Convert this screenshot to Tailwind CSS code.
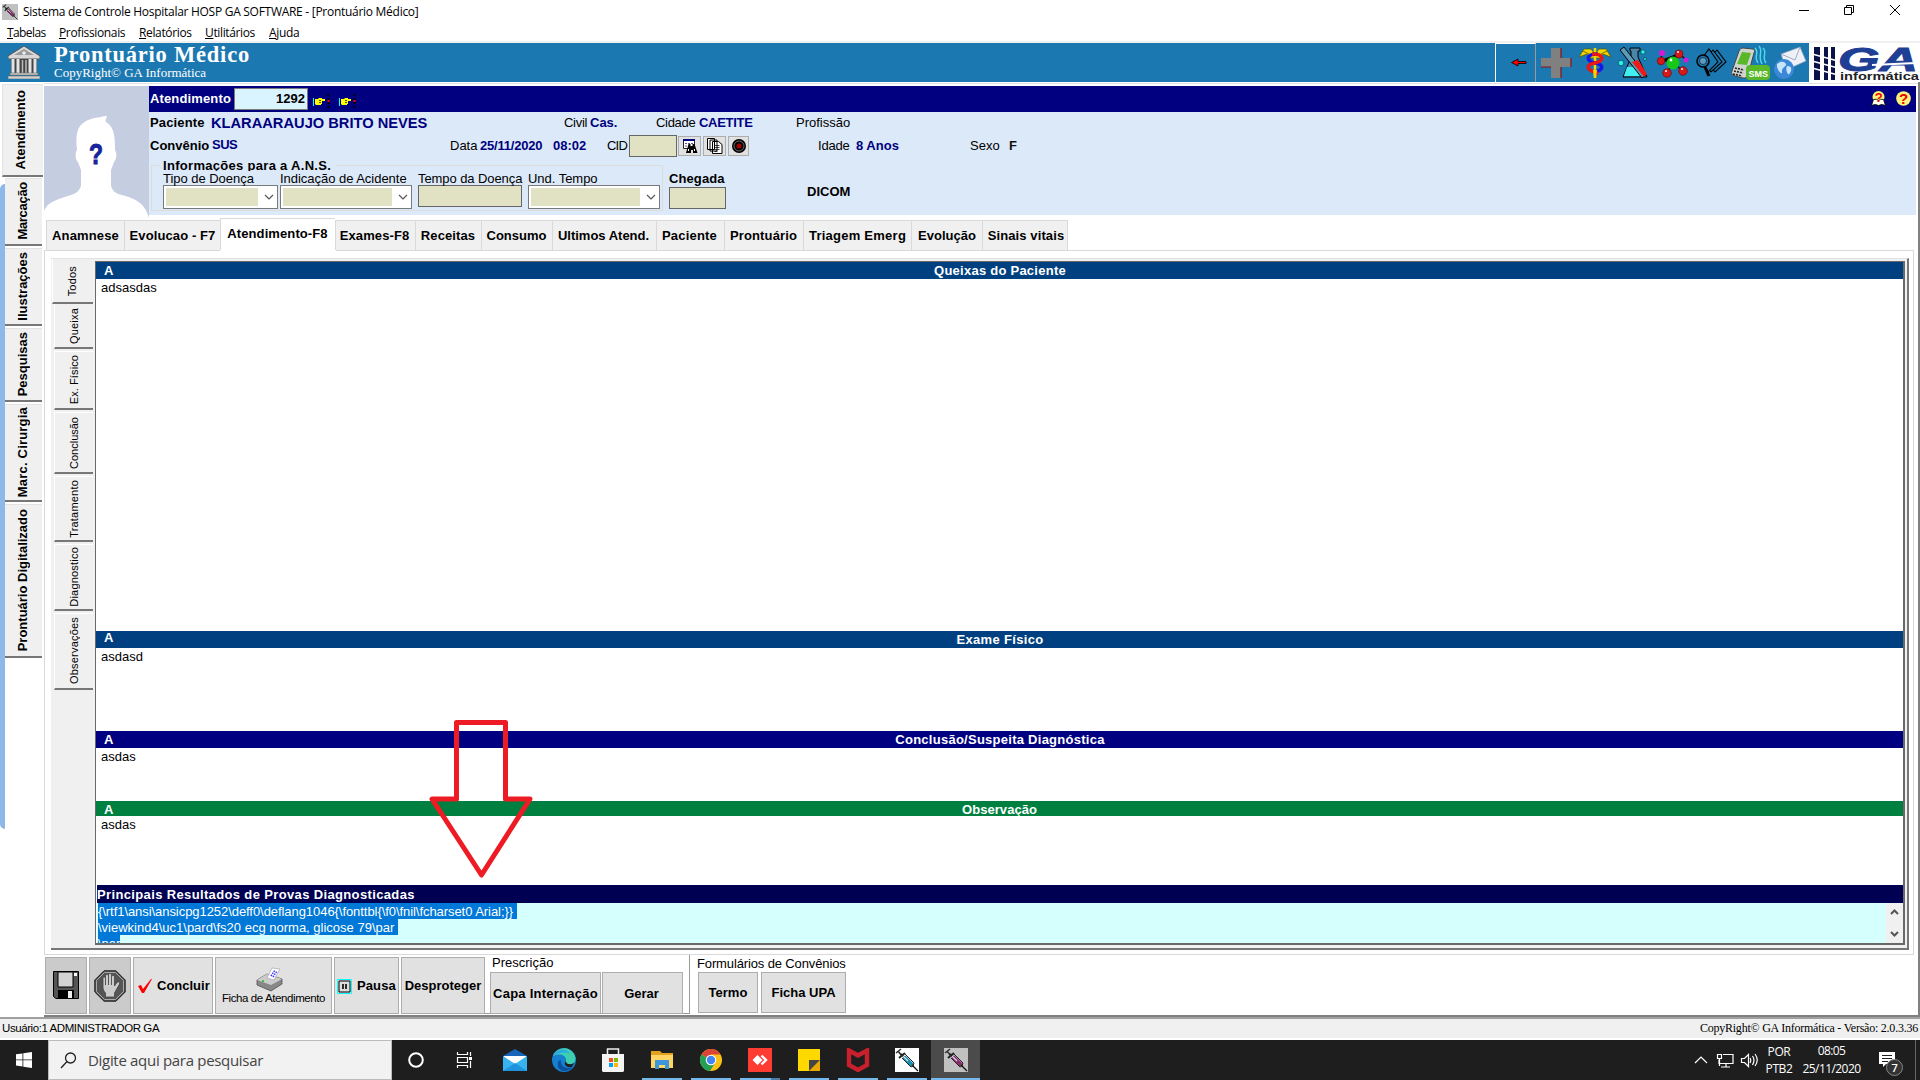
<!DOCTYPE html>
<html lang="pt-BR">
<head>
<meta charset="utf-8">
<title>Sistema de Controle Hospitalar HOSP GA SOFTWARE</title>
<script src="https://cdn.jsdelivr.net/npm/@tailwindcss/browser@4"></script>
</head>
<body class="flex h-[1080px] w-[1920px] flex-col overflow-hidden bg-white font-['Liberation_Sans',sans-serif] text-[13px] leading-4 whitespace-nowrap text-black">

<svg class="hidden">
  <symbol id="syringe" viewBox="0 0 24 24">
    <path d="M1 5l5-4M3 3l4 5" stroke="#333" stroke-width="1.6"/>
    <path d="M4 10l6-5M6 6l12 12" stroke="#222" stroke-width="2"/>
    <path d="M9 9l8 8" stroke="currentColor" stroke-width="4"/>
    <path d="M7 10l9 9 2-1M10 6l9 9-1 3" stroke="#222" fill="none"/>
    <path d="M8 8l5 5" stroke="#d8d8e8" stroke-width="1.2"/>
    <path d="M18 18l5 5" stroke="#111" stroke-width="1.2"/>
  </symbol>
  <symbol id="chev" viewBox="0 0 10 6"><path d="M1 1l4 4 4-4" fill="none" stroke="#555" stroke-width="1.2"/></symbol>
  <symbol id="hand" viewBox="0 0 17 14">
    <path d="M.5 4v8" stroke="#0ff"/><path d="M2 5h3l1-1h3v1h3v2H9v3H8v1H3l-1-1z" fill="#ff0"/>
    <path d="M6 6.500h2M6 8.500h2" stroke="#000" stroke-width=".7"/><path d="M15.500 0v14" stroke="#000" stroke-width="2" stroke-dasharray="2 2"/><path d="M14.500 6h2v2h-2z" fill="#f00"/>
  </symbol>
</svg>

<!-- Title bar -->
<div class="flex h-[23px] items-center font-['Open_Sans',sans-serif] text-[12px]">
  <svg class="ml-[2px] size-4 bg-[#c0c0c0] text-[#8b2a6b]"><use href="#syringe"/></svg>
  <span class="ml-[5px] flex-1 tracking-[-0.28px]">Sistema de Controle Hospitalar HOSP GA SOFTWARE - [Prontuário Médico]</span>
  <svg class="mb-[3px] h-3 w-[110px]" viewBox="0 0 110 12" fill="none" stroke="#000"><path d="M4 6.500h10M49.500 3.500h7v7h-7zM51.500 3v-1.500h7v7h-2M95 1l10 10M105 1l-10 10"/></svg>
  <div class="w-[15px]"></div>
</div>
<div class="flex h-[18px] items-center border-b border-white pt-[2px] pl-[7px] font-['Open_Sans',sans-serif] text-[12px] tracking-[-0.36px]">
  <span class="w-[52px] tracking-[-0.6px]"><u>T</u>abelas</span><span class="w-[80px]"><u>P</u>rofissionais</span><span class="w-[66px]"><u>R</u>elatórios</span><span class="w-[64px]"><u>U</u>tilitários</span><span><u>A</u>juda</span>
</div>
<div class="h-[2px] bg-[#f0f0f0]"></div>

<!-- Module header -->
<div class="flex h-[39px] bg-[#1c78b0] font-['Liberation_Serif',serif] text-white">
  <svg class="ml-[8px] mt-[3px] h-[33px] w-[32px]" viewBox="0 0 32 33">
    <path d="M0 10L16 0l16 10v3H0z" fill="#d8d8d8" stroke="#555"/><path d="M6 9l10-6 10 6z" fill="#999"/><circle cx="16" cy="7" r="1.800" fill="#eee"/>
    <path d="M3 13h26v15H3z" fill="#444"/><path d="M5 13v14M10 13v14M22 13v14M27 13v14" stroke="#e4e4e4" stroke-width="3"/><path d="M14.500 14v13M18 14v13" stroke="#bbb" stroke-width="1.500"/>
    <path d="M2 27h28v2H2zM0 30h32v3H0z" fill="#d0d0d0" stroke="#666" stroke-width=".6"/>
  </svg>
  <div class="ml-[14px] flex-1">
    <div class="h-[21px] text-[22.5px] leading-[23px] font-bold tracking-[0.78px]">Prontuário Médico</div>
    <div class="text-[13px] leading-[17px]">CopyRight© GA Informática</div>
  </div>
  <div class="flex w-[41px] items-center justify-center border-t border-r border-l border-t-white border-r-[#999] border-l-white">
    <svg class="mr-px mb-[2px] ml-[8px] h-[9px] w-4" viewBox="0 0 16 9"><path d="M.5 4.500L7 1v2.500h8v2H7V8z" fill="#f00" stroke="#000" stroke-width=".8"/></svg>
  </div>
  <svg class="h-[39px] w-[273px]" viewBox="1536 43 273 39">
    <path d="M1551 48h10v10h10v9h-10v11h-10V67h-10v-9h10z" fill="#808080"/><path d="M1561 48v10M1541 67h10M1561 67v11M1571 58v9" stroke="#8b1010" stroke-width="1.200"/>
    <!-- caduceus -->
    <path d="M1579 57l5-8h7l4 5 4-5h7l5 8-8-3-3 4h-10l-3-4z" fill="#f0d800" stroke="#5a5000" stroke-width=".7"/><path d="M1583 51l8 4M1607 51l-8 4" stroke="#806c00"/>
    <path d="M1595 48v30" stroke="#f0d800" stroke-width="2.500"/>
    <path d="M1598 54c-12 0-13 7-3 9s8 7 0 9" fill="none" stroke="#1616e8" stroke-width="3.500"/><path d="M1592 54c12 0 13 7 3 9s-8 7 0 9l3 2" fill="none" stroke="#e81616" stroke-width="3.500"/>
    <path d="M1594 70l1 8 1-8" stroke="#f0d800" stroke-width="2"/>
    <!-- laboratory glassware -->
    <path d="M1630 48h10v3h-2v6l9 20h-24l8-20v-6h-1z" fill="#4a86a8" stroke="#000"/><path d="M1627 67h12l5 9h-20z" fill="#40f0f0"/>
    <path d="M1620 50l4-3 22 28-4 3z" fill="#5b9bb8" stroke="#000"/><path d="M1632 62l6-2 9 14-3 3z" fill="#f01818"/>
    <g fill="#2cf0e0" stroke="#045" stroke-width=".7"><circle cx="1621" cy="63" r="2.800"/><circle cx="1643" cy="52" r="2.200"/><circle cx="1645" cy="59" r="1.500"/></g>
    <!-- molecule -->
    <path d="M1661 60l12 3 6-10M1673 63l-6 10M1673 63l10 8M1679 53l7 7M1661 60l1-7" stroke="#111" stroke-width="1.500"/>
    <circle cx="1673" cy="63" r="6.500" fill="#18c818"/><g fill="#d81818" stroke="#600" stroke-width=".6"><circle cx="1661" cy="61" r="3.800"/><circle cx="1679" cy="54" r="4"/><circle cx="1667" cy="73" r="4.300"/><circle cx="1683" cy="71" r="4.300"/></g>
    <g fill="#d818d8"><circle cx="1662" cy="53" r="3"/><circle cx="1686" cy="60" r="2.500"/></g><g fill="#fff"><circle cx="1671" cy="60" r="1.400"/><circle cx="1678" cy="52" r="1"/><circle cx="1666" cy="71" r="1"/><circle cx="1682" cy="69" r="1"/></g>
    <!-- document search -->
    <g fill="#1c78b0" stroke="#000" stroke-width="1.100"><path d="M1717 50l9 12-11 10-8-11z"/><path d="M1713 50l9 12-11 10-8-11z"/><path d="M1709 49l9 13-10 10-8-11z"/></g><circle cx="1703" cy="61" r="6" fill="#1c78b0" stroke="#000" stroke-width="1.500"/><circle cx="1703" cy="61" r="3.500" fill="#5a9cc4" stroke="#000" stroke-width=".6"/><path d="M1705 67l4 9" stroke="#000" stroke-width="3"/>
    <!-- phone with messages -->
    <path d="M1743 48l10 1c2 1 2 2 1 4l-6 22c-1 3-3 3-5 3l-8-2c-3-1-4-2-3-5l7-20c1-2 2-3 4-3z" fill="#d0d4d0" stroke="#444"/><path d="M1742 52l9 1-4 12-10-1z" fill="#58b828"/><path d="M1735 68l9 2M1734 71l9 2M1733 74l9 2" stroke="#222" stroke-width="1.600" stroke-dasharray="2 1"/>
    <path d="M1755 48c5 5-2 8 3 15M1759 46c5 6-2 9 3 18M1763 48c5 5-2 8 3 15" stroke="#48d8e8" stroke-width="1.500" fill="none"/>
    <rect x="1746" y="65" width="24" height="15" rx="4" fill="#58b828"/><text x="1748.500" y="76.500" font-family="Liberation Sans" font-size="9" font-weight="bold" fill="#fff">SMS</text>
    <!-- web mail -->
    <path d="M1781 54l19-7 6 14-20 9z" fill="#eef2f8" stroke="#8898b0" stroke-width=".7"/><path d="M1781 54l14 6 5-13" fill="none" stroke="#a0acc0"/><circle cx="1784" cy="69" r="10" fill="#3c88d8"/><path d="M1777 64c5-4 8-2 9 0s-5 4-4 8-6-2-5-8zM1787 66c5 0 5 3 3 7s-5-3-3-7z" fill="#c8e4f8"/>
  </svg>
  <svg class="h-[39px] w-[111px] bg-white" viewBox="1809 43 111 39">
    <path d="M1814 47h6v33h-6zM1824 47h4v33h-4zM1831 47h4v33h-4z" fill="#0a1248"/><path d="M1812 54l26 7M1812 61l26 7M1812 68l26 7" stroke="#fff" stroke-width="1.500"/>
    <text x="1838" y="71" font-family="Liberation Sans" font-size="33" font-weight="bold" font-style="italic" fill="#1f3f95" stroke="#1f3f95" stroke-width="1" textLength="80" lengthAdjust="spacingAndGlyphs">GA</text>
    <path d="M1872 64l44-2v2l-44 2z" fill="#fff"/>
    <text x="1840" y="80" font-family="Liberation Sans" font-size="10" font-weight="bold" fill="#222" textLength="79" lengthAdjust="spacingAndGlyphs">informática</text>
  </svg>
</div>

<!-- Work area -->
<div class="flex h-[935px]">
  <!-- Side tabs -->
  <div class="flex w-[44px] flex-col border-t border-white pt-[1px] font-bold">
    <div class="ml-[2px] flex h-[93px] w-[41px] items-center justify-center border-t border-b-2 border-l border-t-[#e3e3e3] border-b-[#777] border-l-[#e3e3e3] bg-[#f0f0f0]"><span class="mr-[5px] rotate-180 [writing-mode:vertical-rl]">Atendimento</span></div>
    <div class="flex flex-1">
      <div class="mt-[7px] h-[645px] w-[5px] rounded-l-[5px] bg-[#8cb8ea]"></div>
      <div class="flex w-[37px] flex-col gap-[2px] pt-px">
        <div class="flex h-[68px] items-center justify-center border-t border-b-2 border-t-[#e3e3e3] border-b-[#777] bg-[#f0f0f0]"><span class="mr-px mb-[2px] rotate-180 tracking-[-0.3px] [writing-mode:vertical-rl]">Marcação</span></div>
        <div class="flex h-[78px] items-center justify-center border-t border-b-2 border-t-[#e3e3e3] border-b-[#777] bg-[#f0f0f0]"><span class="mr-px rotate-180 [writing-mode:vertical-rl]">Ilustrações</span></div>
        <div class="flex h-[74px] items-center justify-center border-t border-b-2 border-t-[#e3e3e3] border-b-[#777] bg-[#f0f0f0]"><span class="mr-px mb-px rotate-180 [writing-mode:vertical-rl]">Pesquisas</span></div>
        <div class="flex h-[98px] items-center justify-center border-t border-b-2 border-t-[#e3e3e3] border-b-[#777] bg-[#f0f0f0]"><span class="mr-px rotate-180 tracking-[0.2px] [writing-mode:vertical-rl]">Marc. Cirurgia</span></div>
        <div class="flex h-[154px] items-center justify-center border-t border-b-2 border-t-[#e3e3e3] border-b-[#777] bg-[#f0f0f0]"><span class="mr-px mb-px rotate-180 [writing-mode:vertical-rl]">Prontuário Digitalizado</span></div>
      </div>
    </div>
  </div>

  <div class="flex w-[1876px] flex-col border-r-2 border-b-2 border-[#808080]">
    <div class="mt-px h-[3px] border-t border-[#e3e3e3]"></div>
    <!-- Patient data -->
    <div class="flex h-[132px]">
      <svg class="h-[132px] w-[105px] bg-[#c5cde0]" viewBox="0 0 105 132">
        <path d="M0 132v-7c3-9 14-12 27-16 8-3 8-5 10-9V84l-3-8c-3-2-3-10-1-12-1-10-1-18 3-24 5-6 12-8 21-9 2-1 4-1 6-1-1 3-2 4-1 6 9 5 9 17 9 28 2 3 2 9-1 12l-3 8v16c2 5 3 7 11 9 14 4 23 8 27 23z" fill="#fff"/>
        <text x="45" y="78" font-family="Liberation Sans" font-size="29" font-weight="bold" fill="#17249a" stroke="#17249a" textLength="14" lengthAdjust="spacingAndGlyphs">?</text>
      </svg>
      <div class="w-[1767px]">
        <div class="flex h-[26px] items-center bg-[#000080] pl-px">
          <span class="w-[84px] pb-px font-bold tracking-[0.14px] text-white">Atendimento</span>
          <span class="flex h-[22px] w-[74px] items-center justify-end border border-[#7a7a7a] bg-[#d9f3ff] pr-[2px] font-bold">1292</span>
          <svg class="mt-[4px] ml-[5px] h-[14px] w-[17px]"><use href="#hand"/></svg>
          <svg class="mt-[4px] ml-[9px] h-[14px] w-[17px]"><use href="#hand"/></svg>
          <div class="flex-1"></div>
          <svg class="mr-[5px] h-4 w-[40px]" viewBox="0 0 40 16">
            <circle cx="7.500" cy="6" r="6" fill="#fff27a"/><path d="M.5 14.500l2-6q3-1 5 1 2-2 5-1l2 6q-4-2-7 0-3-2-7 0z" fill="#ffe" stroke="#000" stroke-width=".8"/><text x="3.800" y="10.500" font-size="13" font-weight="bold" fill="#e00">?</text>
            <circle cx="32.500" cy="7.500" r="7.300" fill="#fff27a"/><text x="28" y="13" font-size="15" font-weight="bold" fill="#e00">?</text>
          </svg>
        </div>
        <div class="h-[103px] bg-[#dce9f8] pt-[3px] pl-px">
          <div class="flex h-[20px] text-[#000080]">
            <span class="w-[61px] font-bold tracking-[0.15px] text-black">Paciente</span><span class="w-[353px] text-[14.67px] font-bold">KLARAARAUJO BRITO NEVES</span>
            <span class="w-[26px] tracking-[-0.3px] text-black">Civil</span><span class="w-[66px] font-bold">Cas.</span>
            <span class="w-[43px] tracking-[-0.3px] text-black">Cidade</span><span class="w-[97px] font-bold tracking-[-0.3px]">CAETITE</span><span class="text-black">Profissão</span>
          </div>
          <div class="flex h-[22px] items-center text-[#000080]">
            <span class="w-[62px] pb-px font-bold text-black">Convênio</span><span class="w-[238px] pb-[2px] font-bold tracking-[-0.5px]">SUS</span>
            <span class="w-[30px] text-black">Data</span><span class="w-[73px] font-bold tracking-[-0.2px]">25/11/2020</span><span class="w-[54px] font-bold">08:02</span>
            <span class="w-[22px] tracking-[-0.8px] text-black">CID</span><span class="h-[22px] w-[48px] border border-[#666] bg-[#e1e1c4]"></span>
            <span class="ml-px flex h-5 w-[23px] items-center justify-center border border-[#adadad] bg-[#e1e1e1]"><svg class="h-4 w-4" viewBox="0 0 16 16"><path d="M1.500 1.500h11v9h-11z" fill="#fff" stroke="#223"/><path d="M1 1h12v2H1z" fill="#000080"/><path d="M3 5.500h8M3 8h3" stroke="#558" stroke-dasharray="2 1"/><path d="M6.500 6h2v2h2V6h2l3 9h-4.500v-3h-2v3H4z" fill="#000"/><path d="M6.500 11v2M12.500 11v2" stroke="#fff"/></svg></span>
            <span class="ml-[2px] flex h-5 w-[23px] items-center justify-center border border-[#adadad] bg-[#e1e1e1]"><svg class="h-4 w-4" viewBox="0 0 16 16" fill="#fff" stroke="#000"><path d="M.5.5h7v11h-7zM3 2h7v11H3zM5.500 3.500h6l3.500 3v9H5.500z"/><path d="M7.500 7.500h5M7.500 9.500h5M7.500 11.500h5M7.500 13.500h3" stroke-width=".7"/></svg></span>
            <span class="ml-[2px] flex h-5 w-[21px] items-center justify-center border border-[#adadad] bg-[#e1e1e1]"><svg class="h-4 w-4" viewBox="0 0 16 16"><circle cx="8" cy="8" r="7" fill="#000"/><circle cx="8" cy="8" r="5" fill="none" stroke="#999" stroke-width=".7"/><circle cx="8" cy="8" r="2.500" fill="#a00"/></svg></span>
            <span class="ml-[69px] w-[38px] tracking-[-0.2px] text-black">Idade</span><span class="w-[114px] font-bold">8 Anos</span><span class="w-[39px] text-black">Sexo</span><span class="font-bold text-[#111]">F</span>
          </div>
          <div class="flex">
            <div class="relative mt-[8px] ml-px h-[46px] w-[512px] border border-[#dcdcdc] pt-[4px] pl-[11px]">
              <div class="absolute -top-[8px] left-[7px] h-[13px] overflow-hidden bg-[#dce9f8] px-[4px] font-bold tracking-[0.3px]">Informações para a A.N.S.</div>
              <div class="relative flex tracking-[-0.03px]">
                <div class="w-[117px]"><div class="h-[15px] leading-[17px]">Tipo de Doença</div>
                  <div class="flex h-6 w-[115px] items-center border border-[#7a7a7a] bg-white pl-[2px]"><span class="h-[18px] w-[92px] bg-[#e1e1c4]"></span><svg class="ml-[6px] h-[6px] w-[10px]"><use href="#chev"/></svg></div></div>
                <div class="w-[138px]"><div class="h-[15px] leading-[17px]">Indicação de Acidente</div>
                  <div class="flex h-6 w-[132px] items-center border border-[#7a7a7a] bg-white pl-[2px]"><span class="h-[18px] w-[109px] bg-[#e1e1c4]"></span><svg class="ml-[6px] h-[6px] w-[10px]"><use href="#chev"/></svg></div></div>
                <div class="w-[110px]"><div class="h-[15px] leading-[17px] tracking-[-0.08px]">Tempo da Doença</div>
                  <div class="h-[22px] w-[104px] border border-[#666] bg-[#e1e1c4]"></div></div>
                <div><div class="h-[15px] leading-[17px]">Und. Tempo</div>
                  <div class="flex h-6 w-[132px] items-center border border-[#7a7a7a] bg-white pl-[2px]"><span class="h-[18px] w-[109px] bg-[#e1e1c4]"></span><svg class="ml-[6px] h-[6px] w-[10px]"><use href="#chev"/></svg></div></div>
              </div>
            </div>
            <div class="mt-[14px] ml-[6px] w-[138px] font-bold tracking-[0.1px]">Chegada<div class="h-[22px] w-[57px] border border-[#666] bg-[#e1e1c4]"></div></div>
            <div class="mt-[27px] font-bold">DICOM</div>
          </div>
        </div>
      </div>
    </div>

    <!-- Record tabs -->
    <div class="flex h-[32px] items-end pl-[2px] text-center font-bold">
      <div class="h-[30px] w-[78px] border-t border-l border-[#d9d9d9] bg-[#f0f0f0] pt-[7px] tracking-[0.15px]">Anamnese</div>
      <div class="h-[30px] w-[96px] border-t border-l border-[#d9d9d9] bg-[#f0f0f0] pt-[7px] tracking-[0.1px]">Evolucao - F7</div>
      <div class="h-[32px] w-[115px] border-t border-l border-[#d9d9d9] bg-white pt-[7px] pr-px tracking-[0.1px]">Atendimento-F8</div>
      <div class="h-[30px] w-[80px] border-t border-l border-[#d9d9d9] bg-[#f0f0f0] pt-[7px] pr-[2px] tracking-[0.1px]">Exames-F8</div>
      <div class="h-[30px] w-[66px] border-t border-l border-[#d9d9d9] bg-[#f0f0f0] pt-[7px] pr-px tracking-[0.1px]">Receitas</div>
      <div class="h-[30px] w-[71px] border-t border-l border-[#d9d9d9] bg-[#f0f0f0] pt-[7px] pr-px">Consumo</div>
      <div class="h-[30px] w-[104px] border-t border-l border-[#d9d9d9] bg-[#f0f0f0] pt-[7px] pr-[2px]">Ultimos Atend.</div>
      <div class="h-[30px] w-[68px] border-t border-l border-[#d9d9d9] bg-[#f0f0f0] pt-[7px] pr-[2px] tracking-[0.2px]">Paciente</div>
      <div class="h-[30px] w-[79px] border-t border-l border-[#d9d9d9] bg-[#f0f0f0] pt-[7px] pr-px tracking-[0.15px]">Prontuário</div>
      <div class="h-[30px] w-[108px] border-t border-l border-[#d9d9d9] bg-[#f0f0f0] pt-[7px] tracking-[0.25px]">Triagem Emerg</div>
      <div class="h-[30px] w-[71px] border-t border-l border-[#d9d9d9] bg-[#f0f0f0] pt-[7px]">Evolução</div>
      <div class="h-[30px] w-[86px] border-x border-t border-[#d9d9d9] bg-[#f0f0f0] pt-[7px] pl-[2px] tracking-[0.1px]">Sinais vitais</div>
    </div>

    <div class="flex h-[705px] w-[1870px] border-r border-b border-l border-[#d9d9d9]">
      <div class="flex flex-1 flex-col">
        <div class="flex h-px"><div class="w-[175px] bg-[#d9d9d9]"></div><div class="w-[116px]"></div><div class="flex-1 bg-[#d9d9d9]"></div></div>
        <div class="mt-[7px] ml-[6px] flex h-[692px] w-[1858px] border-t border-r-2 border-b-2 border-t-[#e3e3e3] border-r-[#777] border-b-[#777] bg-[#f0f0f0]">
          <!-- Section tabs -->
          <div class="flex w-[44px] flex-col items-end gap-[2px] pr-[2px] text-[11px] leading-[14px]">
            <div class="-mb-[2px] flex h-[45px] w-[41px] items-center justify-center border-b-2 border-l border-b-[#777] border-l-white"><span class="mt-px mr-[2px] rotate-180 tracking-[0.2px] [writing-mode:vertical-rl]">Todos</span></div>
            <div class="flex h-[45px] w-[39px] items-center justify-center border-b-2 border-l border-b-[#777] border-l-white"><span class="mt-px rotate-180 tracking-[0.2px] [writing-mode:vertical-rl]">Queixa</span></div>
            <div class="flex h-[59px] w-[39px] items-center justify-center border-t border-b-2 border-l border-t-white border-b-[#777] border-l-white"><span class="rotate-180 tracking-[0.1px] [writing-mode:vertical-rl]">Ex. Físico</span></div>
            <div class="flex h-[62px] w-[39px] items-center justify-center border-t border-b-2 border-l border-t-white border-b-[#777] border-l-white"><span class="rotate-180 [writing-mode:vertical-rl]">Conclusão</span></div>
            <div class="flex h-[66px] w-[39px] items-center justify-center border-t border-b-2 border-l border-t-white border-b-[#777] border-l-white"><span class="rotate-180 tracking-[0.2px] [writing-mode:vertical-rl]">Tratamento</span></div>
            <div class="flex h-[67px] w-[39px] items-center justify-center border-t border-b-2 border-l border-t-white border-b-[#777] border-l-white"><span class="rotate-180 tracking-[0.2px] [writing-mode:vertical-rl]">Diagnostico</span></div>
            <div class="flex h-[77px] w-[39px] items-center justify-center border-t border-b-2 border-l border-t-white border-b-[#777] border-l-white"><span class="rotate-180 tracking-[0.2px] [writing-mode:vertical-rl]">Observações</span></div>
          </div>
          <!-- Clinical notes -->
          <div class="relative mt-[2px] flex h-[684px] w-[1810px] flex-col border-t border-r-2 border-b-2 border-l border-[#696969] bg-white">
            <div class="flex h-[17px] bg-[#004080] font-bold text-white"><span class="w-[17px] pt-px pl-[8px]">A</span><span class="flex-1 pt-px pr-[16px] text-center tracking-[0.25px]">Queixas do Paciente</span></div>
            <div class="h-[352px] pt-px pl-[5px]">adsasdas</div>
            <div class="flex h-[17px] bg-[#004080] font-bold text-white"><span class="w-[17px] pl-[8px] leading-[14px]">A</span><span class="flex-1 pt-px pr-[16px] text-center tracking-[0.32px]">Exame Físico</span></div>
            <div class="h-[83px] pt-px pl-[5px]">asdasd</div>
            <div class="flex h-[17px] bg-[#000080] font-bold text-white"><span class="w-[17px] pt-px pl-[8px]">A</span><span class="flex-1 pt-px pr-[16px] text-center tracking-[0.26px]">Conclusão/Suspeita Diagnóstica</span></div>
            <div class="h-[53px] pt-px pl-[5px]">asdas</div>
            <div class="flex h-[15px] bg-[#008040] font-bold text-white"><span class="w-[17px] pt-px pl-[8px]">A</span><span class="flex-1 pt-px pr-[17px] text-center tracking-[0.06px]">Observação</span></div>
            <div class="h-[69px] pt-px pl-[5px]">asdas</div>
            <div class="ml-px h-[18px] bg-[#000052] leading-[19px] font-bold tracking-[0.36px] text-white">Principais Resultados de Provas Diagnosticadas</div>
            <div class="ml-px flex h-[40px] bg-[#d4fffc]">
              <div class="flex flex-1 flex-col items-start overflow-hidden pl-px text-white">
                <div class="h-4 shrink-0 bg-[#0078d7] pr-[4px] leading-[18px] tracking-[-0.06px]">{\rtf1\ansi\ansicpg1252\deff0\deflang1046{\fonttbl{\f0\fnil\fcharset0 Arial;}}</div>
                <div class="h-4 shrink-0 bg-[#0078d7] pr-[4px] leading-[18px]">\viewkind4\uc1\pard\fs20 ecg norma, glicose 79\par</div>
                <div class="h-4 shrink-0 bg-[#0078d7] leading-[18px]">\par</div>
              </div>
              <div class="flex w-[17px] flex-col items-center justify-between bg-[#f0f0f0] py-[6px]"><svg class="h-[6px] w-[9px]" viewBox="0 0 9 6"><path d="M1 5l3.500-3.500L8 5" fill="none" stroke="#555" stroke-width="2"/></svg><svg class="h-[6px] w-[9px]" viewBox="0 0 9 6"><path d="M1 1l3.500 3.500L8 1" fill="none" stroke="#555" stroke-width="2"/></svg></div>
            </div>
            <!-- Annotation arrow over the notes -->
            <svg class="absolute top-[453px] left-[332px] h-[166px] w-[106px]" viewBox="428 715 106 166"><path d="M456.500 722.500h49V799h24.500l-48.500 76L432 799h24.500z" fill="none" stroke="#ed1c24" stroke-width="5" stroke-linejoin="round"/></svg>
          </div>
        </div>
      </div>
    </div>

    <!-- Actions -->
    <div class="flex h-[60px] pl-px font-bold">
      <div class="mt-[2px] flex h-[57px] w-[42px] items-center justify-center border border-[#adadad] bg-[#cbcbcb]"><svg class="mr-px mb-px h-7 w-[26px]" viewBox="0 0 26 28"><path d="M.5.5h25v27H3l-2.500-2z" fill="#555" stroke="#000"/><path d="M5 1h15v15H5z" fill="#d4d4d4" stroke="#000"/><path d="M21 2h3v3h-3z" fill="#fff"/><path d="M5 19h16v9H5z" fill="#000"/><path d="M15 20h4v7h-4z" fill="#eee"/></svg></div>
      <div class="mt-[2px] ml-[2px] flex h-[57px] w-[42px] items-center justify-center border border-[#adadad] bg-[#cbcbcb]"><svg class="h-8 w-8" viewBox="0 0 32 32"><path d="M10 .8h12L31.200 10v12L22 31.200H10L.8 22V10z" fill="#555" stroke="#222"/><path d="M10.500 2.500h11l8 8v11l-8 8h-11l-8-8v-11z" fill="none" stroke="#aaa"/><path d="M9 17V8.500c0-2 2.500-2 2.500 0V6c0-2 3-2 3 0V5c0-2 3-2 3 0v2c0-2 3-2 3 0v9l2-3c2-2 4-1 3 1l-5 9v4h-9v-4c-2-2-2.500-4-2.500-6z" fill="#ccc" stroke="#444" stroke-width=".8"/><path d="M11.500 8v7M14.500 6v9M17.500 6v9" stroke="#555"/></svg></div>
      <div class="mt-[2px] ml-[2px] flex h-[57px] w-[80px] items-center border border-[#adadad] bg-[#e1e1e1] pt-px pl-[3px]"><svg class="h-4 w-[16px]" viewBox="0 0 16 16"><path d="M1 8l3-1 2 4L14 1l1 0L7 15H5z" fill="#f00"/></svg><span class="ml-[4px]">Concluir</span></div>
      <div class="mt-[2px] ml-[2px] flex h-[57px] w-[117px] flex-col items-center border border-[#adadad] bg-[#e1e1e1] pt-[9px] text-[11.5px] font-normal tracking-[-0.4px]"><svg class="mr-[9px] h-[25px] w-[27px]" viewBox="0 0 27 25"><path d="M1 13l10-6 15 5v5l-11 7L1 18z" fill="#888" stroke="#444" stroke-width=".7"/><path d="M1 13l10-6 15 5-11 6z" fill="#ccc"/><path d="M11 11L16 1l8 1-6 11z" fill="#fff" stroke="#99a" stroke-width=".6"/><path d="M15 9l4-6M17 10l4-6" stroke="#33f" stroke-width="1.500" stroke-dasharray="1.500 1"/><circle cx="7" cy="14" r="1" fill="#0c0"/></svg><span class="leading-[12px]">Ficha de Atendimento</span></div>
      <div class="mt-[2px] ml-[2px] flex h-[57px] w-[65px] items-center border border-[#adadad] bg-[#e1e1e1] pt-px pl-[2px]"><svg class="h-[15px] w-[15px]" viewBox="0 0 15 15"><path d="M.5.500h14v14H.5z" fill="#ddd" stroke="#0ff"/><path d="M2 2h11v11H2z" fill="#ddd" stroke="#000"/><path d="M6 5v5M9 5v5" stroke="#000" stroke-width="1.600"/></svg><span class="ml-[5px] tracking-[0.1px]">Pausa</span></div>
      <div class="mt-[2px] ml-[2px] flex h-[57px] w-[84px] items-center justify-center border border-[#adadad] bg-[#e1e1e1] pt-px">Desproteger</div>
      <div class="h-[59px] w-[205px] border-r border-b border-[#999] pl-[5px]">
        <div class="h-[17px] pl-[2px] leading-[16px] font-normal">Prescrição</div>
        <div class="flex gap-px"><div class="flex h-[42px] w-[111px] items-center justify-center border border-[#adadad] bg-[#e1e1e1] pt-px tracking-[0.25px]">Capa Internação</div><div class="flex h-[42px] w-[81px] items-center justify-center border border-[#adadad] bg-[#e1e1e1] pt-px pr-[2px]">Gerar</div></div>
      </div>
      <div class="pl-[7px]">
        <div class="h-[17px] pt-px font-normal tracking-[-0.13px]"><div class="h-4">Formulários de Convênios</div></div>
        <div class="flex gap-[3px] pl-px"><div class="flex h-[41px] w-[60px] items-center justify-center border border-[#adadad] bg-[#e1e1e1] pt-px">Termo</div><div class="flex h-[41px] w-[85px] items-center justify-center border border-[#adadad] bg-[#e1e1e1] pt-px">Ficha UPA</div></div>
      </div>
    </div>
  </div>
</div>

<!-- Status bar -->
<div class="flex h-[23px] justify-between border-t-2 border-b-2 border-t-[#a0a0a0] border-b-white bg-[#f0f0f0] pr-[2px] pl-[2px] leading-[19px]">
  <span class="text-[11.5px] tracking-[-0.42px]">Usuário:1 ADMINISTRADOR GA</span>
  <span class="font-['Liberation_Serif',serif] text-[12px] tracking-[-0.23px]">CopyRight© GA Informática - Versão: 2.0.3.36</span>
</div>

<!-- Taskbar -->
<div class="flex h-[40px] bg-[#1e1e1e] font-['Open_Sans',sans-serif] text-white">
  <div class="flex w-[48px] items-center justify-center"><svg class="h-4 w-4" viewBox="0 0 16 16"><path d="M0 2.300l6.500-.9v6.100H0zM7.300 1.300L16 0v7.500H7.300zM0 8.300h6.500v6.200L0 13.600zM7.300 8.300H16V16l-8.700-1.200z" fill="#fff"/></svg></div>
  <div class="flex w-[344px] items-center border border-[#bbb] bg-[#f2f2f2] pl-[11px] text-[15px] text-[#444]"><svg class="h-[17px] w-[17px]" viewBox="0 0 17 17" fill="none" stroke="#222" stroke-width="1.300"><circle cx="10.500" cy="6" r="5"/><path d="M7 9.500L1 16"/></svg><span class="ml-[11px] leading-5 tracking-[-0.31px]">Digite aqui para pesquisar</span></div>
  <svg class="h-[40px] w-[98px]" viewBox="392 1040 98 40" fill="none" stroke="#fff"><circle cx="416" cy="1060" r="6.800" stroke-width="2"/><path d="M457.500 1052v2.500h10V1052M457.500 1057.500h10v5h-10zM457.500 1068v-2.500h10v2.500M470.500 1052v4M470.500 1061v7" stroke-width="1.200"/><path d="M469 1057h3v3h-3z" fill="#fff" stroke="none"/></svg>
  <div class="flex w-[490px]">
    <div class="flex w-[49px] items-center justify-center"><svg class="h-[22px] w-6" viewBox="0 0 24 22"><path d="M0 7l12-7 12 7v15H0z" fill="#1565b8"/><path d="M1 7h22v10H1z" fill="#fff"/><path d="M0 7l12 8 12-8v15H0z" fill="#35b4f0"/><path d="M0 22l12-8 12 8z" fill="#1f94dc"/></svg></div>
    <div class="flex w-[49px] items-center justify-center"><svg class="size-6" viewBox="0 0 24 24"><circle cx="12" cy="12" r="12" fill="#1580d0"/><path d="M1 8C4-1 17-3 22 6c3 5 1 10-4 10-5 1-5-2-4-3 1-6-7-8-13-5z" fill="#3fcfae"/><path d="M1 8c4-8 14-8 17-2-5-3-12-1-17 2z" fill="#2aa8e8"/><path d="M9 12c-1 6 5 10 12 7-5 6-14 5-15-1-1-4 1-6 3-6z" fill="#0c4f9c"/><path d="M14 13c0 4 5 4 8 2l-2 4c-6 1-9-3-6-6z" fill="#1e1e1e"/></svg></div>
    <div class="flex w-[49px] items-center justify-center"><svg class="size-6" viewBox="0 0 24 24"><path d="M6.500 7V1h11v6" fill="none" stroke="#eee" stroke-width="1.500"/><path d="M1 6h22v17l-1 1H2l-1-1z" fill="#f4f4f4"/><path d="M8 10h4v4H8z" fill="#f25022"/><path d="M13 10h4v4h-4z" fill="#7fba00"/><path d="M8 15h4v4H8z" fill="#00a4ef"/><path d="M13 15h4v4h-4z" fill="#ffb900"/></svg></div>
    <div class="flex w-[49px] flex-col items-center pt-[10px]"><svg class="h-5 w-[22px]" viewBox="0 0 22 20"><path d="M0 1h9l2 2h11v15H0z" fill="#e0a020"/><path d="M0 5h22v13H0z" fill="#ffd564"/><path d="M4 10h14v9h-4v-4H8v4H4z" fill="#3c96dc"/></svg><div class="mt-auto h-[2px] w-10 bg-[#76b9ed]"></div></div>
    <div class="flex w-[49px] flex-col items-center pt-[9px]"><svg class="size-[22px]" viewBox="0 0 22 22"><circle cx="11" cy="11" r="11" fill="#fbc116"/><path d="M11 11L1.500 5.500A11 11 0 0 1 20.500 5.500H11z" fill="#dc4437"/><path d="M11 11L1.500 5.500A11 11 0 0 0 10 22l5-8z" fill="#23a056"/><circle cx="11" cy="11" r="5.300" fill="#fff"/><circle cx="11" cy="11" r="4.200" fill="#4285f4"/></svg><div class="mt-auto h-[2px] w-10 bg-[#76b9ed]"></div></div>
    <div class="flex w-[49px] flex-col items-center pt-2"><svg class="size-6 bg-[#ff3c32]" viewBox="0 0 24 24"><path d="M9.500 7l5 5-5 5-5-5z" fill="#fff"/><path d="M13.500 7.500l4.500 4.500-4.500 4.500" fill="none" stroke="#fff" stroke-width="2.400"/></svg><div class="mt-auto flex h-[2px] w-10 bg-[#4a7da8]"><div class="w-[31px] bg-[#76b9ed]"></div></div></div>
    <div class="flex w-[49px] flex-col items-center pt-[9px]"><svg class="size-[22px]" viewBox="0 0 22 22"><path d="M0 0h22v22H0z" fill="#ffd800"/><path d="M22 11v11H11z" fill="#e8a800"/><path d="M11 22V11h11z" fill="#444"/></svg><div class="mt-auto h-[2px] w-10 bg-[#76b9ed]"></div></div>
    <div class="flex w-[49px] flex-col items-center pt-2"><svg class="size-6" viewBox="0 0 24 24"><path d="M3 2.500l9 5 9-5V17l-9 5-9-5z" fill="none" stroke="#c8202c" stroke-width="4.400"/></svg><div class="mt-auto h-[2px] w-10 bg-[#76b9ed]"></div></div>
    <div class="flex w-[49px] flex-col items-center pt-2"><svg class="size-6 bg-white text-[#1890b0]"><use href="#syringe"/></svg><div class="mt-auto h-[2px] w-10 bg-[#76b9ed]"></div></div>
    <div class="flex w-[49px] flex-col items-center bg-[#4b4b4b] pt-2"><svg class="size-6 bg-[#c0c0c0] text-[#8b2a6b]"><use href="#syringe"/></svg><div class="mt-auto h-[2px] w-full bg-[#76b9ed]"></div></div>
  </div>
  <div class="flex-1"></div>
  <svg class="h-[40px] w-[70px]" viewBox="1690 1040 70 40" fill="none" stroke="#fff" stroke-width="1.200"><path d="M1695 1063l6-6 6 6M1723 1054.500h10v9h-14v-4M1726 1063.500v3M1721 1067h9M1717.500 1054.500h4v4h-4zM1719.500 1059v7M1741.500 1058.500h3l4-4v12l-4-4h-3zM1750 1058q1.500 2 0 5M1752.500 1056q3 4 0 9M1755 1054q4.500 6 0 12"/></svg>
  <div class="ml-[4px] flex w-[30px] flex-col items-center pt-[3px] text-[12px] leading-[17px] tracking-[-0.4px]"><span>POR</span><span>PTB2</span></div>
  <div class="ml-[7px] flex w-[61px] flex-col items-center pt-[2px] text-[12px] leading-[18px] tracking-[-0.57px]"><span>08:05</span><span>25/11/2020</span></div>
  <svg class="ml-[13px] h-[40px] w-[40px]" viewBox="1875 1040 40 40"><path d="M1879 1052h16v12h-9l-3 3v-3h-4z" fill="#fff"/><path d="M1882 1055.500h10M1882 1058.500h10M1882 1061.500h6" stroke="#1e1e1e"/><circle cx="1894.500" cy="1067.500" r="8" fill="#333" stroke="#888"/><text x="1891.500" y="1072" font-family="Open Sans" font-size="11" font-weight="600" fill="#fff">7</text></svg>
  <div class="w-[5px] border-l border-[#666]"></div>
</div>
</body>
</html>
